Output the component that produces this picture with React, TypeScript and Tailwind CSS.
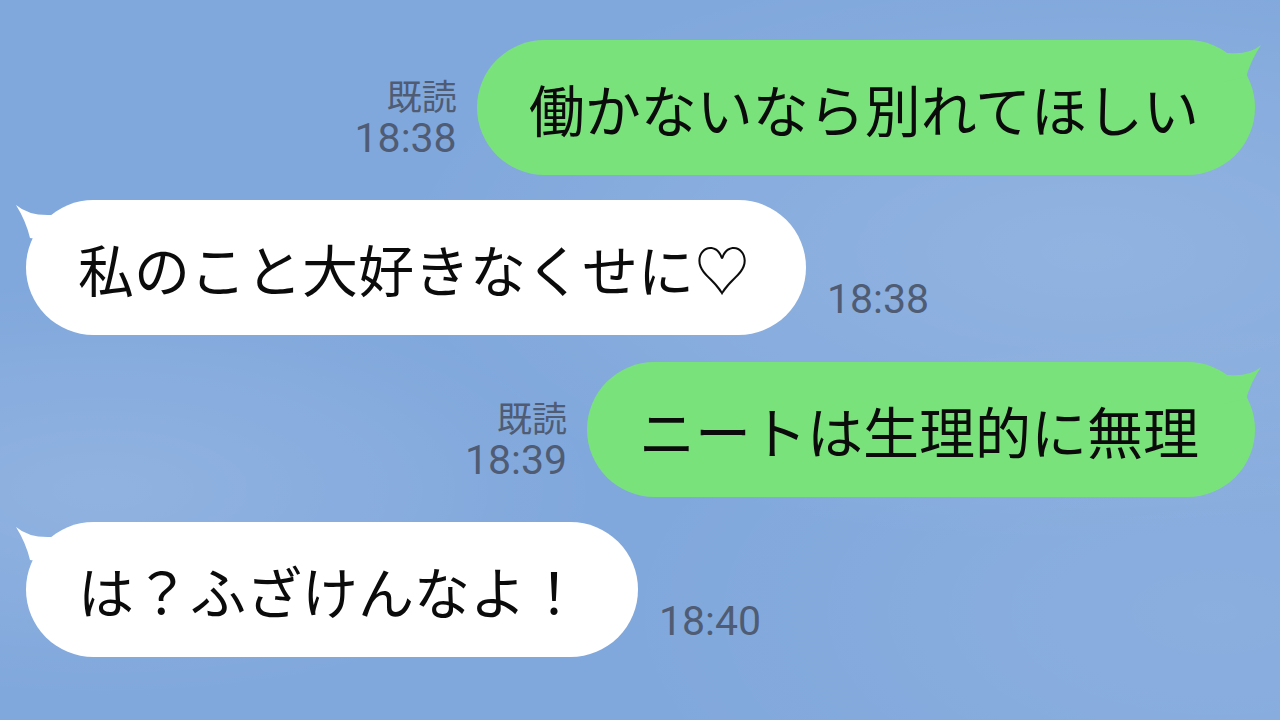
const jp = "font-['Noto_Sans_CJK_JP','Noto_Sans',sans-serif]";
const num = "font-['Roboto','Noto_Sans',sans-serif]";

// LINE-style tail drawn at the top corner of each bubble
function Tail({ side, color }: { side: "left" | "right"; color: string }) {
  if (side === "right") {
    return (
      <svg
        className="pointer-events-none absolute -right-[10px] top-0"
        width="44"
        height="44"
        viewBox="0 0 44 44"
      >
        <path d="M7 13 Q28 15 40 5 Q30 20 25 37 L0 42 L0 13 Z" fill={color} />
      </svg>
    );
  }
  return (
    <svg
      className="pointer-events-none absolute -left-[12px] top-0"
      width="44"
      height="44"
      viewBox="0 0 44 44"
    >
      <path d="M37 15 Q15 16 2 5 Q12 21 16 38 L44 42 L44 15 Z" fill={color} />
    </svg>
  );
}

function Bubble({ text, mine }: { text: string; mine?: boolean }) {
  const color = mine ? "#7ae27b" : "#ffffff";
  return (
    <div
      className={`relative flex h-[135px] items-center rounded-full pl-[52px] pr-[56px] ${
        mine ? "bg-[#7ae27b]" : "bg-white"
      }`}
    >
      <Tail side={mine ? "right" : "left"} color={color} />
      <span className={`${jp} relative whitespace-nowrap text-[56px] leading-[56px] text-[#0b0b0b]`}>
        {text}
      </span>
    </div>
  );
}

function Sent({ text, time }: { text: string; time: string }) {
  return (
    <div className="flex items-end justify-end gap-[20px]">
      <div className="flex flex-col items-end pb-[17px] text-[#4f5c73]">
        <span className={`${jp} text-[35px] leading-[38px]`}>既読</span>
        <span className={`${num} mt-[4px] text-[41px] leading-[40px]`}>{time}</span>
      </div>
      <Bubble text={text} mine />
    </div>
  );
}

function Received({ text, time }: { text: string; time: string }) {
  return (
    <div className="flex items-end gap-[21px]">
      <Bubble text={text} />
      <span className={`${num} pb-[16px] text-[41px] leading-[40px] text-[#4f5c73]`}>
        {time}
      </span>
    </div>
  );
}

export default function App() {
  return (
    <div className="h-[720px] w-full overflow-hidden bg-[#81a8dc] bg-[image:radial-gradient(ellipse_at_85%_35%,rgba(255,255,255,0.13),transparent_45%),radial-gradient(ellipse_at_8%_68%,rgba(255,255,255,0.12),transparent_30%),radial-gradient(ellipse_at_95%_85%,rgba(255,255,255,0.08),transparent_35%)]">
      <div className="flex flex-col gap-[25px] pl-[26px] pr-[25px] pt-[40px]">
        <Sent text="働かないなら別れてほしい" time="18:38" />
        <Received text="私のこと大好きなくせに♡" time="18:38" />
        <div className="mt-[2px]">
          <Sent text="ニートは生理的に無理" time="18:39" />
        </div>
        <Received text="は？ふざけんなよ！" time="18:40" />
      </div>
    </div>
  );
}
